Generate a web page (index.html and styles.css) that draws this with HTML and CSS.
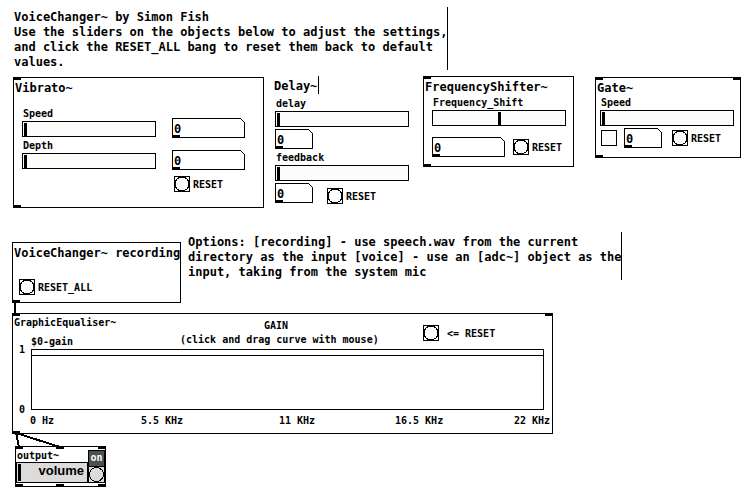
FILE: index.html
```html
<!DOCTYPE html>
<html lang="en">
<head>
<meta charset="utf-8">
<title>VoiceChanger~</title>
<link rel="stylesheet" href="styles.css">
</head>
<body>
<main class="canvas">
  <svg class="wires" width="120" height="499" aria-hidden="true">
    <path d="M15 302V314M16 433L19 447M16 433L60 447"/>
  </svg>

  <p class="comment intro">VoiceChanger~ by Simon Fish<br>Use the sliders on the objects below to adjust the settings,<br>and click the RESET_ALL bang to reset them back to default<br>values.</p>

  <section class="node vibrato">
    <i class="port top left"></i><i class="port bottom left"></i>
    <h2>Vibrato~</h2>
    <div class="vibrato-grid">
      <div class="field"><label for="v-speed">Speed</label><input id="v-speed" type="range" value="0"></div>
      <span class="num wide"><input type="text" value="0" aria-label="Speed value"></span>
      <div class="field"><label for="v-depth">Depth</label><input id="v-depth" type="range" value="0"></div>
      <span class="num wide"><input type="text" value="0" aria-label="Depth value"></span>
      <button class="bang" type="button"><svg viewBox="0 0 16 16"><rect x=".5" y=".5" width="15" height="15"/><circle cx="8" cy="8" r="7"/></svg>RESET</button>
    </div>
  </section>

  <section class="delay">
    <h2 class="comment">Delay~</h2>
    <div class="delay-body">
      <div class="field"><label for="d-delay">delay</label><input id="d-delay" type="range" value="0"></div>
      <div class="row"><span class="num"><input type="text" value="0" aria-label="Delay value"></span></div>
      <div class="field"><label for="d-feedback">feedback</label><input id="d-feedback" type="range" value="0"></div>
      <div class="row">
        <span class="num"><input type="text" value="0" aria-label="Feedback value"></span>
        <button class="bang" type="button"><svg viewBox="0 0 16 16"><rect x=".5" y=".5" width="15" height="15"/><circle cx="8" cy="8" r="7"/></svg>RESET</button>
      </div>
    </div>
  </section>

  <section class="node shifter">
    <i class="port top left"></i><i class="port bottom left"></i>
    <h2>FrequencyShifter~</h2>
    <div class="shifter-body">
      <div class="field"><label for="f-shift">Frequency_Shift</label><input id="f-shift" type="range" value="50"></div>
      <div class="row">
        <span class="num wide"><input type="text" value="0" aria-label="Frequency shift value"></span>
        <button class="bang" type="button"><svg viewBox="0 0 16 16"><rect x=".5" y=".5" width="15" height="15"/><circle cx="8" cy="8" r="7"/></svg>RESET</button>
      </div>
    </div>
  </section>

  <section class="node gate">
    <i class="port top left"></i><i class="port top right"></i><i class="port bottom left"></i>
    <h2>Gate~</h2>
    <div class="gate-body">
      <div class="field"><label for="g-speed">Speed</label><input id="g-speed" type="range" value="0"></div>
      <div class="row">
        <input class="toggle" type="checkbox" aria-label="Gate">
        <span class="num"><input type="text" value="0" aria-label="Gate value"></span>
        <button class="bang" type="button"><svg viewBox="0 0 16 16"><rect x=".5" y=".5" width="15" height="15"/><circle cx="8" cy="8" r="7"/></svg>RESET</button>
      </div>
    </div>
  </section>

  <section class="node recording">
    <i class="port bottom left"></i>
    <h2>VoiceChanger~ recording</h2>
    <button class="bang" type="button"><svg viewBox="0 0 16 16"><rect x=".5" y=".5" width="15" height="15"/><circle cx="8" cy="8" r="7"/></svg>RESET_ALL</button>
  </section>

  <p class="comment options">Options: [recording] - use speech.wav from the current<br>directory as the input [voice] - use an [adc~] object as the<br>input, taking from the system mic</p>

  <section class="node equaliser">
    <i class="port top left"></i><i class="port top right"></i><i class="port bottom left"></i>
    <header class="eq-head">
      <div class="eq-names"><h3>GraphicEqualiser~</h3><span>$0-gain</span></div>
      <div class="eq-caption"><span class="gain">GAIN</span><span>(click and drag curve with mouse)</span></div>
      <button class="bang" type="button"><svg viewBox="0 0 16 16"><rect x=".5" y=".5" width="15" height="15"/><circle cx="8" cy="8" r="7"/></svg>&lt;= RESET</button>
    </header>
    <div class="eq-plot">
      <div class="eq-y"><span>1</span><span>0</span></div>
      <div class="eq-array"><div class="eq-curve"></div></div>
    </div>
    <div class="eq-x"><span>0 Hz</span><span>5.5 KHz</span><span>11 KHz</span><span>16.5 KHz</span><span>22 KHz</span></div>
  </section>

  <section class="node output">
    <i class="port top left"></i><i class="port top middle"></i><i class="port top right"></i>
    <i class="port bottom left"></i><i class="port bottom middle"></i><i class="port bottom right"></i>
    <div class="out-main">
      <h3>output~</h3>
      <div class="volume"><input id="volume" type="range" value="0"><label for="volume">volume</label></div>
    </div>
    <div class="out-side">
      <button class="on" type="button">on</button>
      <button class="mute" type="button" aria-label="Mute"><svg viewBox="0 0 17 17"><rect x=".5" y=".5" width="16" height="16"/><circle cx="8.5" cy="8.5" r="7"/></svg></button>
    </div>
  </section>
</main>
</body>
</html>
```
FILE: styles.css
```css
* { box-sizing: border-box; }

body {
  margin: 0;
  background: #fff;
  color: #000;
  font: bold 10px/15px "DejaVu Sans Mono", monospace;
}

h2, h3, p { margin: 0; }
h2, .comment { font-size: 12px; line-height: 15px; font-weight: bold; }
h3 { font-size: 10px; line-height: 15px; }
button, input { font: inherit; color: inherit; margin: 0; padding: 0; border-radius: 0; }
button { border: 0; background: none; cursor: pointer; }

/* The patch is a free canvas: only its top-level objects are placed by coordinates. */
.canvas { position: relative; min-height: 100vh; overflow: hidden; }
.canvas > * { position: absolute; }

.wires { left: 0; top: 0; }
.wires path { fill: none; stroke: #000; stroke-width: 2; shape-rendering: crispEdges; }

.comment { border-right: 1px solid #000; padding: 3px 0 0 2px; white-space: nowrap; }
.intro { left: 12px; top: 7px; }
.options { left: 186px; top: 232px; }

.node { border: 1px solid #000; padding-top: 3px; }
.node > h2 { padding-left: 1px; white-space: nowrap; }

.port { position: absolute; width: 8px; height: 3px; background: #000; }
.top { top: -1px; }
.bottom { bottom: -1px; }
.left { left: -1px; }
.middle { left: 40px; }
.right { right: -1px; }

.field { display: flex; flex-direction: column; width: 134px; }
.field label { padding-left: 1px; }

input[type="range"] {
  appearance: none;
  width: 100%;
  height: 16px;
  padding: 0 1px;
  border: 1px solid #000;
  background: #fcfcfc;
}
input[type="range"]::-webkit-slider-thumb {
  appearance: none;
  width: 3px;
  height: 13px;
  background: #000;
}

.num { position: relative; display: flex; width: 38px; height: 20px; }
.num.wide { width: 73px; }
.num input {
  width: 100%;
  border: 1px solid #000;
  padding: 2px 0 0 1px;
  background: #fff;
  font-size: 12px;
  line-height: 15px;
}
.num::before {
  content: "";
  position: absolute;
  left: 0;
  bottom: 0;
  width: 8px;
  height: 3px;
  background: #000;
}
.num::after {
  content: "";
  position: absolute;
  top: 0;
  right: 0;
  width: 5px;
  height: 5px;
  background: linear-gradient(to top right, #fff 42%, #000 42% 58%, #fff 58%);
}

.bang { display: flex; align-items: center; gap: 3px; height: 16px; white-space: nowrap; }
.bang svg { width: 16px; height: 16px; }
.bang rect, .bang circle { fill: #fcfcfc; stroke: #000; shape-rendering: crispEdges; }

.toggle { appearance: none; width: 16px; height: 16px; border: 1px solid #000; background: #fcfcfc; }
.toggle:checked { background: #000; }

.row { display: flex; align-items: center; }

.vibrato { left: 13px; top: 77px; width: 251px; padding-bottom: 15px; }
.vibrato-grid {
  display: grid;
  grid-template-columns: 134px 73px;
  grid-template-rows: 32px 32px;
  column-gap: 16px;
  padding: 10px 0 0 8px;
}
.vibrato-grid .num { align-self: end; }
.vibrato-grid .bang { grid-column: 2; margin: 6px 0 0 2px; }

.delay { left: 272px; top: 76px; }
.delay h2 { width: 47px; }
.delay-body { display: flex; flex-direction: column; padding: 2px 0 0 3px; }
.delay-body .row { gap: 14px; height: 21px; margin-top: 2px; }
.delay-body .num { align-self: flex-start; }
.delay-body .bang { align-self: flex-end; }

.shifter { left: 423px; top: 76px; width: 151px; padding-bottom: 9px; }
.shifter-body { padding-left: 8px; }
.shifter-body .row { gap: 8px; margin-top: 11px; }

.gate { left: 595px; top: 77px; width: 146px; padding-bottom: 9px; }
.gate h2 { line-height: 14px; }
.gate-body { padding-left: 4px; }
.gate-body .row { margin-top: 2px; padding-left: 1px; gap: 7px; }
.gate-body .bang { padding-left: 3px; }

.recording { left: 12px; top: 242px; width: 169px; padding-bottom: 7px; }
.recording .bang { margin: 18px 0 0 6px; }

.equaliser { left: 12px; top: 313px; width: 541px; padding: 1px 0 5px; }
.eq-head { display: grid; grid-template-columns: 167px 198px auto; height: 34px; }
.eq-head > div { display: flex; flex-direction: column; white-space: nowrap; }
.eq-names { justify-content: space-between; padding-left: 1px; }
.eq-names span { padding-left: 17px; }
.eq-caption { padding-top: 4px; line-height: 14px; text-align: center; }
.gain { padding-right: 6px; }
.eq-head .bang { margin: 10px 0 0 45px; gap: 8px; }
.eq-plot { display: flex; height: 61px; padding-right: 8px; }
.eq-y { display: flex; flex-direction: column; justify-content: space-between; width: 18px; margin: -7px 0; padding-left: 6px; }
.eq-array { flex: 1; border: 1px solid #000; padding-top: 5px; }
.eq-curve { border-top: 1px solid #000; }
.eq-x { display: grid; grid-template-columns: 111px 138px 116px 119px auto; padding: 3px 0 0 17px; white-space: nowrap; }

.output { left: 15px; top: 446px; width: 91px; display: flex; padding: 3px 0; }
.out-main { flex: 1; }
.out-main h3 { padding-left: 1px; line-height: 12px; }
.out-side { display: flex; flex-direction: column; width: 17px; }
.volume { display: grid; height: 21px; }
.volume > * { grid-area: 1 / 1; }
.volume input { height: 21px; background: #dcdcdc; }
.volume input::-webkit-slider-thumb { height: 17px; }
.volume label {
  z-index: 1;
  justify-self: end;
  padding-right: 4px;
  font: bold 13px/18px "Liberation Sans", Arial, sans-serif;
  pointer-events: none;
}
.on { display: flex; justify-content: center; height: 17px; border: 1px solid #000; background: #4c5154; color: #fcfcfc; line-height: 14px; }
.mute { height: 16px; }
.mute svg { display: block; width: 17px; height: 17px; margin-top: -1px; }
.mute rect, .mute circle { fill: #dcdcdc; stroke: #000; shape-rendering: crispEdges; }
```
